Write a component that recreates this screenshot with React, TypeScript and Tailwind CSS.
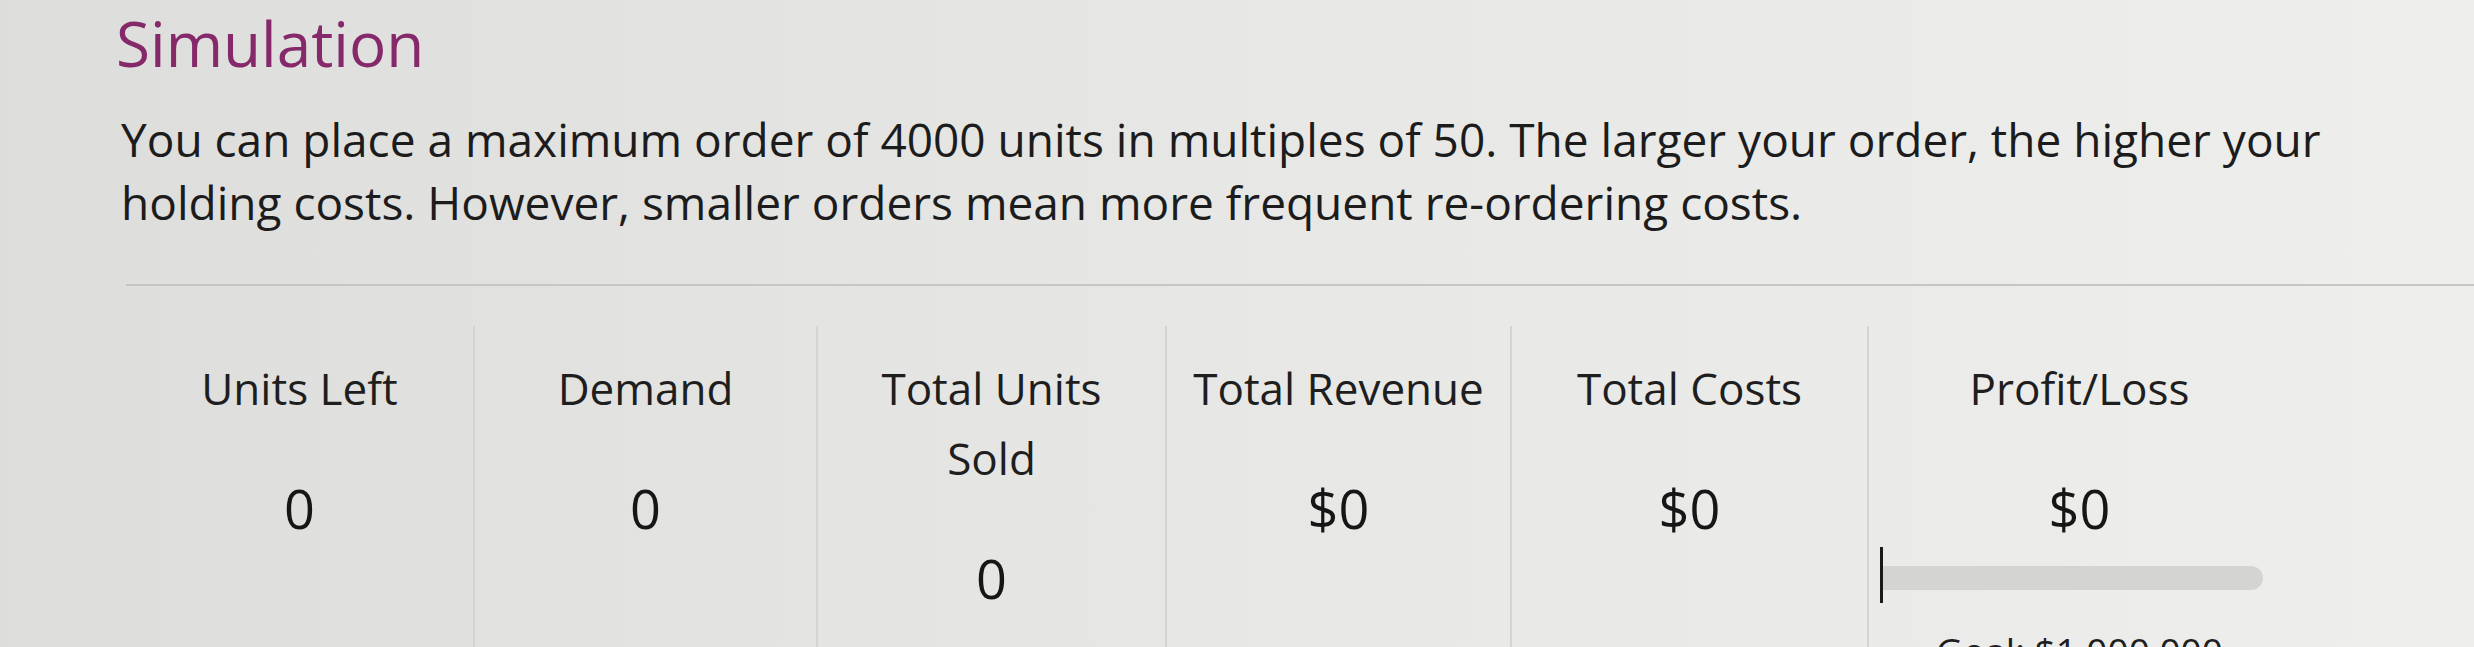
import React from 'react';

const stats = [
  { label: 'Units Left', value: '0' },
  { label: 'Demand', value: '0' },
  { label: 'Total Units Sold', value: '0' },
  { label: 'Total Revenue', value: '$0' },
  { label: 'Total Costs', value: '$0' },
];

function StatCell({ label, value, first }: { label: string; value: string; first?: boolean }) {
  return (
    <div className={`flex flex-col items-center px-4 pt-[27px] text-center ${first ? '' : 'border-l-2 border-[#d4d4d2]'}`}>
      <div className="text-[44px] leading-[70px] text-[#1e1e1e]">{label}</div>
      <div className="mt-[50px] text-[54px] leading-[70px] text-[#161616]">{value}</div>
    </div>
  );
}

export default function App() {
  return (
    <div
      className="w-[2474px] h-[647px] overflow-hidden bg-gradient-to-r from-[#dddddb] via-[#e7e7e5] to-[#eeeeec] pl-[116px]"
      style={{ fontFamily: '"Open Sans", "Noto Sans", sans-serif' }}
    >
      <h1 className="text-[62px] leading-[86px] text-[#86296a]">Simulation</h1>

      <p className="mt-[22px] w-[2240px] pl-[5px] text-[46px] leading-[63px] text-[#1c1c1c]">
        You can place a maximum order of 4000 units in multiples of 50. The larger your order, the higher your
        holding costs. However, smaller orders mean more frequent re-ordering costs.
      </p>

      <div className="ml-[10px] mt-[50px] border-t-2 border-[#c6c6c4]" />

      {/* Stats table */}
      <div className="ml-[10px] mt-[40px] grid h-[400px] grid-cols-[347px_343px_349px_345px_357px_423px]">
        {stats.map((s, i) => (
          <StatCell key={s.label} label={s.label} value={s.value} first={i === 0} />
        ))}

        <div className="flex flex-col items-center border-l-2 border-[#d4d4d2] px-[11px] pt-[27px] text-center">
          <div className="text-[44px] leading-[70px] text-[#1e1e1e]">Profit/Loss</div>
          <div className="mt-[50px] text-[54px] leading-[70px] text-[#161616]">$0</div>
          <div className="mt-[4px] flex h-[56px] w-[383px] items-center self-start">
            <div className="h-full w-[3px] bg-[#1a1a1a]" />
            <div className="mt-[6px] h-[24px] flex-1 rounded-r-full bg-[#d4d4d2]" />
          </div>
          <div className="mt-[20px] text-[37px] leading-[56px] text-[#1e1e1e]">Goal: $1,000,000</div>
        </div>
      </div>
    </div>
  );
}
